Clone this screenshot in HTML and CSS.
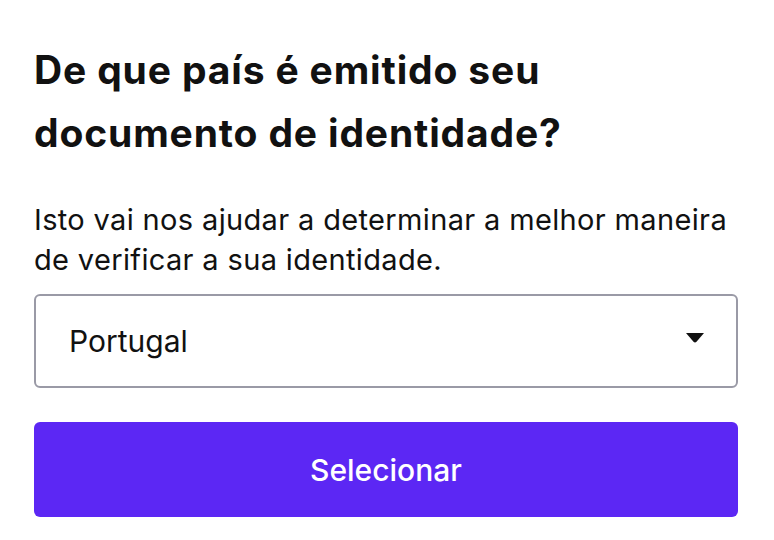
FILE: index.html
```html
<!DOCTYPE html>
<html lang="pt-BR">
  <head>
    <meta charset="utf-8">
    <title>Documento de identidade</title>
    <link rel="stylesheet" href="styles.css">
  </head>
  <body>
    <main class="panel">
      <h1 class="title">De que país é emitido seu documento de identidade?</h1>
      <p class="intro">Isto vai nos ajudar a determinar a melhor maneira de verificar a sua identidade.</p>

      <div class="select">
        <span class="select-value">Portugal</span>
        <svg class="select-arrow" width="18" height="10" viewBox="0 0 18 10">
          <path d="M0 0 H18 L10.5 8.8 Q9 10.2 7.5 8.8 Z" fill="#111"/>
        </svg>
      </div>

      <button class="submitBtn">Selecionar</button>
    </main>
  </body>
</html>
```

FILE: styles.css
```css
html {
  font-family: Inter, "Liberation Sans", Arial, sans-serif;
}

body {
  margin: 0;
  background-color: #fff;
  color: #111;
}

.panel {
  padding: 38px 36px 0 34px;
}

.title {
  font-size: 39px;
  font-weight: 700;
  letter-spacing: 0.85px;
  line-height: 63px;
  margin: 0;
  width: 600px;
}

.intro {
  font-size: 29px;
  letter-spacing: 0.35px;
  line-height: 40px;
  margin: 36px 0 14px 0;
}

.select {
  display: flex;
  align-items: center;
  justify-content: space-between;
  height: 90px;
  border: 2px solid #9a9aa6;
  border-radius: 6px;
  padding: 0 32px 0 33px;
}

.select-value {
  font-size: 30px;
}

.select-arrow {
  margin-top: -6px;
}

.submitBtn {
  display: block;
  width: 100%;
  height: 95px;
  margin-top: 34px;
  border: none;
  border-radius: 6px;
  background-color: #5c27f4;
  color: #fff;
  font-family: inherit;
  font-size: 30px;
  font-weight: 500;
}
```
